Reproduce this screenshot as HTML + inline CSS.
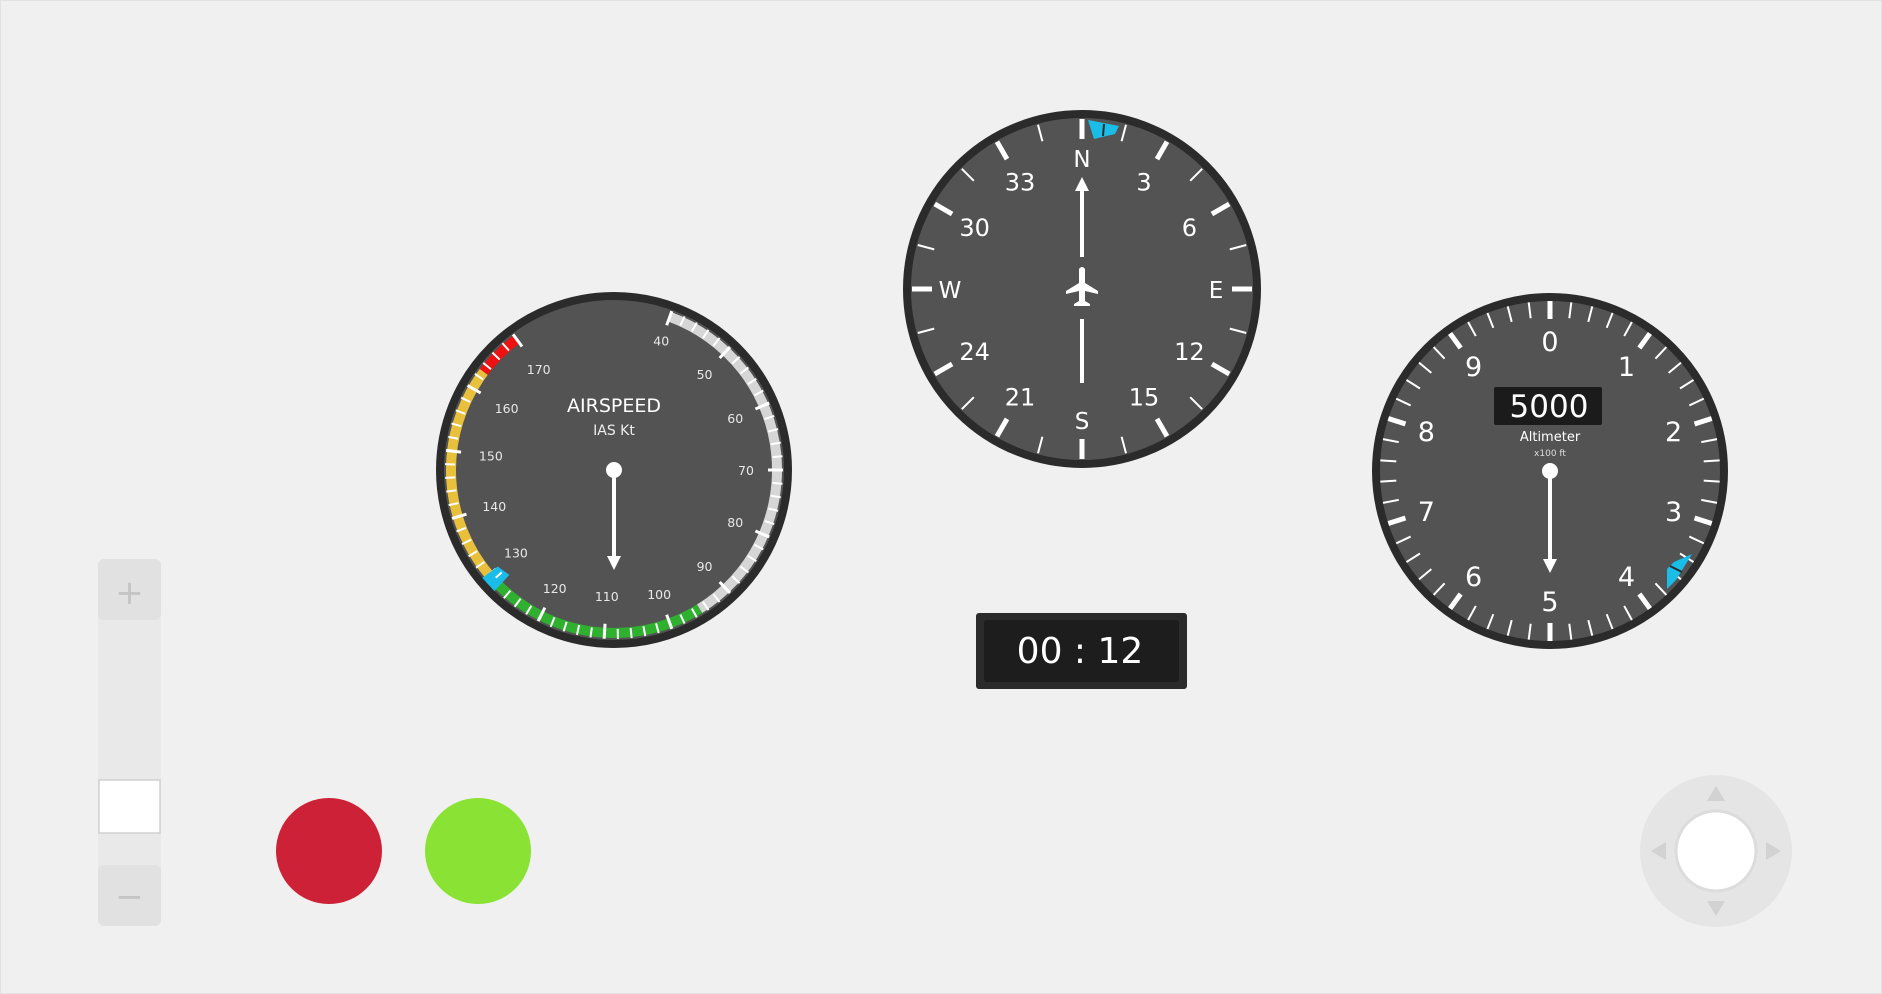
<!DOCTYPE html>
<html><head><meta charset="utf-8"><style>
html,body{margin:0;padding:0;width:1882px;height:994px;overflow:hidden;background:#f0f0f0;font-family:"Liberation Sans","DejaVu Sans",sans-serif}
.frame{position:absolute;left:0;top:0;width:1880px;height:992px;border:1px solid #e2e2e2;background:#f0f0f0}
svg{position:absolute;left:0;top:0}
</style></head><body>
<div class="frame"></div>
<svg width="1882" height="994" viewBox="0 0 1882 994" font-family="'DejaVu Sans','Liberation Sans',sans-serif">
<!-- AIRSPEED -->
<g transform="translate(614,470)">
 <circle r="174" fill="#535353" stroke="#2b2b2c" stroke-width="8"/>
 <g id="asTicks"></g>
 <g fill="#e8e8e8" font-size="12.5" text-anchor="middle">
  <text transform="rotate(20) translate(0,-138) rotate(-20)" dy="5">40</text>
  <text transform="rotate(43.3) translate(0,-132) rotate(-43.3)" dy="5">50</text>
  <text transform="rotate(66.7) translate(0,-132) rotate(-66.7)" dy="5">60</text>
  <text transform="rotate(90) translate(0,-132) rotate(-90)" dy="5">70</text>
  <text transform="rotate(113.3) translate(0,-132) rotate(-113.3)" dy="5">80</text>
  <text transform="rotate(136.7) translate(0,-132) rotate(-136.7)" dy="5">90</text>
  <text transform="rotate(160) translate(0,-132) rotate(-160)" dy="5">100</text>
  <text transform="rotate(183.3) translate(0,-126) rotate(-183.3)" dy="5">110</text>
  <text transform="rotate(206.7) translate(0,-132) rotate(-206.7)" dy="5">120</text>
  <text transform="rotate(230) translate(0,-128) rotate(-230)" dy="5">130</text>
  <text transform="rotate(253.3) translate(0,-125) rotate(-253.3)" dy="5">140</text>
  <text transform="rotate(276.7) translate(0,-124) rotate(-276.7)" dy="5">150</text>
  <text transform="rotate(300) translate(0,-124) rotate(-300)" dy="5">160</text>
  <text transform="rotate(323.3) translate(0,-126) rotate(-323.3)" dy="5">170</text>
 </g>
 <text x="0" y="-58" fill="#fff" font-size="19" text-anchor="middle">AIRSPEED</text>
 <text x="0" y="-35" fill="#eee" font-size="14" text-anchor="middle">IAS Kt</text>
 <line x1="0" y1="0" x2="0" y2="90" stroke="#fff" stroke-width="4"/>
 <circle r="8" fill="#fff"/>
 <path d="M-7,86 L7,86 L0,100 Z" fill="#fff"/>
</g>
<!-- COMPASS -->
<g transform="translate(1082,289)">
 <circle r="175" fill="#535353" stroke="#2b2b2c" stroke-width="8"/>
 <g id="cmTicks"></g>
 <path d="M6,-169 L37,-163 L33,-155 L12,-150 Z" fill="#19bde8"/>
 <line x1="22" y1="-165" x2="21" y2="-153" stroke="#2b2b2c" stroke-width="2"/>
 <g fill="#fff" font-size="24" text-anchor="middle">
  <text x="0" y="-122" font-size="23">N</text>
  <text x="0" y="140" font-size="23">S</text>
  <text x="134" y="9" font-size="23">E</text>
  <text x="-132" y="9" font-size="23">W</text>
  <text transform="rotate(30) translate(0,-124) rotate(-30)" dy="9">3</text>
  <text transform="rotate(60) translate(0,-124) rotate(-60)" dy="9">6</text>
  <text transform="rotate(120) translate(0,-124) rotate(-120)" dy="9">12</text>
  <text transform="rotate(150) translate(0,-124) rotate(-150)" dy="9">15</text>
  <text transform="rotate(210) translate(0,-124) rotate(-210)" dy="9">21</text>
  <text transform="rotate(240) translate(0,-124) rotate(-240)" dy="9">24</text>
  <text transform="rotate(300) translate(0,-124) rotate(-300)" dy="9">30</text>
  <text transform="rotate(330) translate(0,-124) rotate(-330)" dy="9">33</text>
 </g>
 <line x1="0" y1="-32" x2="0" y2="-100" stroke="#fff" stroke-width="4"/>
 <path d="M-7,-98 L7,-98 L0,-112 Z" fill="#fff"/>
 <line x1="0" y1="30" x2="0" y2="94" stroke="#fff" stroke-width="4"/>
 <path d="M-3,-20 Q0,-24 3,-20 L3,-6 L16,2 L16,5 L3,2 L3,12 L8,15 L8,17 L-8,17 L-8,15 L-3,12 L-3,2 L-16,5 L-16,2 L-3,-6 Z" fill="#fff"/>
</g>
<!-- ALTIMETER -->
<g transform="translate(1550,471)">
 <circle r="174" fill="#535353" stroke="#2b2b2c" stroke-width="8"/>
 <g id="alTicks"></g>
 <path d="M124,91 L142,83 L126,109 L117,118 L117,98 Z" fill="#19bde8"/>
 <line x1="120" y1="95" x2="132" y2="101" stroke="#2b2b2c" stroke-width="2"/>
 <g fill="#fff" font-size="27" text-anchor="middle">
  <text transform="rotate(0) translate(0,-130) rotate(0)" dy="10">0</text>
  <text transform="rotate(36) translate(0,-130) rotate(-36)" dy="10">1</text>
  <text transform="rotate(72) translate(0,-130) rotate(-72)" dy="10">2</text>
  <text transform="rotate(108) translate(0,-130) rotate(-108)" dy="10">3</text>
  <text transform="rotate(144) translate(0,-130) rotate(-144)" dy="10">4</text>
  <text transform="rotate(180) translate(0,-130) rotate(-180)" dy="10">5</text>
  <text transform="rotate(216) translate(0,-130) rotate(-216)" dy="10">6</text>
  <text transform="rotate(252) translate(0,-130) rotate(-252)" dy="10">7</text>
  <text transform="rotate(288) translate(0,-130) rotate(-288)" dy="10">8</text>
  <text transform="rotate(324) translate(0,-130) rotate(-324)" dy="10">9</text>
 </g>
 <rect x="-56" y="-84" width="108" height="38" rx="2" fill="#1b1b1b"/>
 <text x="-1" y="-54" fill="#fff" font-size="31" text-anchor="middle">5000</text>
 <text x="0" y="-30" fill="#fff" font-size="13" text-anchor="middle">Altimeter</text>
 <text x="0" y="-15" fill="#ddd" font-size="9" text-anchor="middle">x100 ft</text>
 <line x1="0" y1="0" x2="0" y2="92" stroke="#fff" stroke-width="4"/>
 <circle r="8" fill="#fff"/>
 <path d="M-7,88 L7,88 L0,102 Z" fill="#fff"/>
</g>
<!-- TIMER -->
<rect x="976" y="613" width="211" height="76" rx="3" fill="#2b2b2b"/>
<rect x="984" y="620" width="195" height="62" rx="3" fill="#1d1d1d"/>
<text x="1080" y="663" fill="#fff" font-size="36" text-anchor="middle">00 : 12</text>
<!-- SLIDER -->
<rect x="98" y="559" width="63" height="367" rx="6" fill="#e9e9e9"/>
<rect x="98" y="559" width="63" height="61" rx="6" fill="#e1e1e1"/>
<rect x="98" y="865" width="63" height="61" rx="6" fill="#e1e1e1"/>
<text x="129.5" y="604" fill="#c4c4c4" font-size="34" text-anchor="middle">+</text>
<text x="129.5" y="908" fill="#c4c4c4" font-size="34" text-anchor="middle">−</text>
<rect x="99" y="780" width="61" height="53" fill="#fff" stroke="#d0d0d0" stroke-width="1.5"/>
<!-- BUTTONS -->
<circle cx="329" cy="851" r="53" fill="#cc2136"/>
<circle cx="478" cy="851" r="53" fill="#8ae234"/>
<!-- JOYSTICK -->
<circle cx="1716" cy="851" r="76" fill="#e5e5e5"/>
<circle cx="1716" cy="851" r="40" fill="#fff" stroke="#dcdcdc" stroke-width="3"/>
<g fill="#d2d2d2">
 <path d="M1716,786 L1725,801 L1707,801 Z"/>
 <path d="M1716,916 L1725,901 L1707,901 Z"/>
 <path d="M1651,851 L1666,842 L1666,860 Z"/>
 <path d="M1781,851 L1766,842 L1766,860 Z"/>
</g>
</svg>
<script>
var NS="http://www.w3.org/2000/svg";
function ln(g,a,r1,r2,w,c){var t=a*Math.PI/180,s=Math.sin(t),k=-Math.cos(t);var l=document.createElementNS(NS,"line");
l.setAttribute("x1",s*r1);l.setAttribute("y1",k*r1);l.setAttribute("x2",s*r2);l.setAttribute("y2",k*r2);
l.setAttribute("stroke",c);l.setAttribute("stroke-width",w);g.appendChild(l);}
var g=document.getElementById("asTicks");
function A(kt){return 20+(kt-40)*2.3333;}
function band(k1,k2,c){var a1=(A(k1)-90)*Math.PI/180,a2=(A(k2)-90)*Math.PI/180,r=163;
var p=document.createElementNS(NS,"path");p.setAttribute("d","M"+r*Math.cos(a1)+","+r*Math.sin(a1)+" A"+r+","+r+" 0 "+((A(k2)-A(k1))>180?1:0)+" 1 "+r*Math.cos(a2)+","+r*Math.sin(a2));
p.setAttribute("stroke",c);p.setAttribute("stroke-width",10);p.setAttribute("fill","none");g.appendChild(p);}
band(40,95,"#d6d6d6");band(95,128,"#2fb12f");band(128,163,"#e8c03c");band(163,170,"#ee1111");
for(var k=40;k<=170;k+=2){var maj=k%10==0;ln(g,A(k),maj?154:159,169,maj?3:2,"#fff");}
var b=document.createElementNS(NS,"path");b.setAttribute("transform","rotate("+A(129)+")");
b.setAttribute("d","M-9,-170 L9,-170 L7,-151 L-7,-148 Z");b.setAttribute("fill","#19bde8");g.appendChild(b);
ln(g,A(129),152,160,2,"#fff");
g=document.getElementById("cmTicks");
for(var d=0;d<360;d+=15){if(d%30==0)ln(g,d,150,170,5,"#fff");else ln(g,d,153,170,2,"#fff");}
g=document.getElementById("alTicks");
for(var i=0;i<50;i++){var m=i%5==0;ln(g,i*7.2,m?152:154,170,m?5:2,"#fff");}
</script>
</body></html>
